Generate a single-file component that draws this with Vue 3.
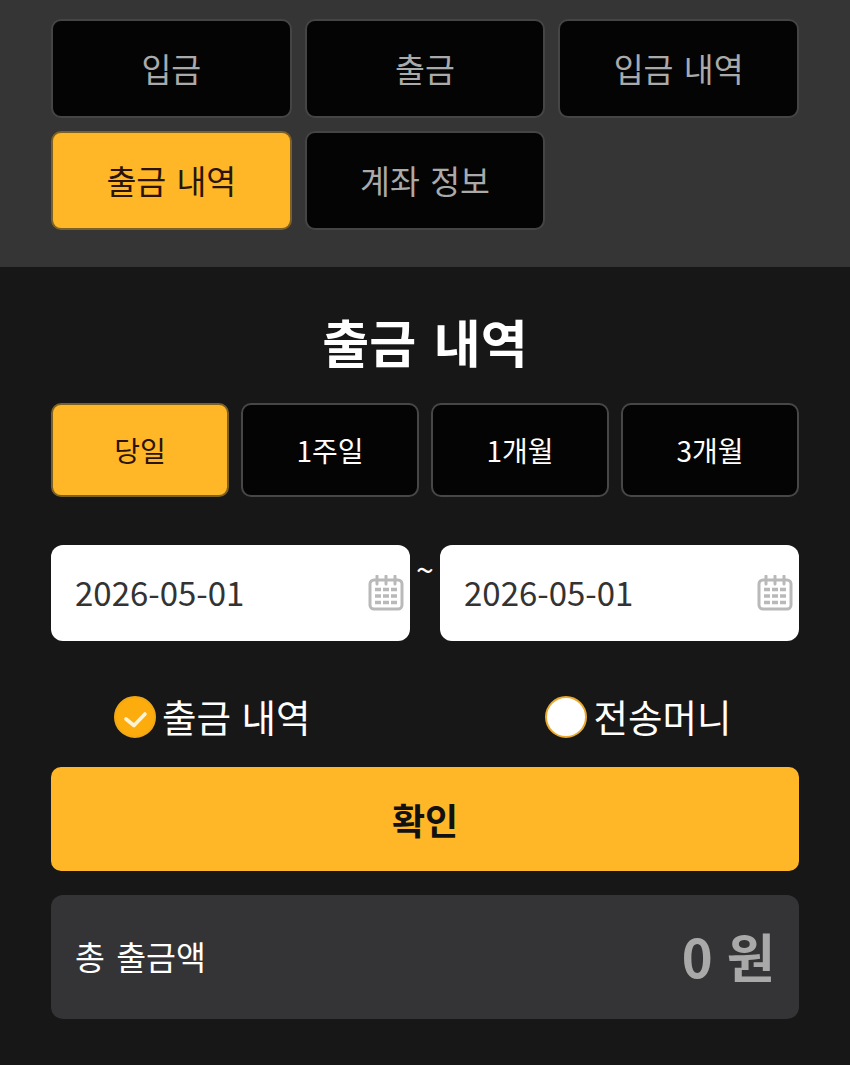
<script setup>
import { ref } from 'vue'

const tabs = ['입금', '출금', '입금 내역', '출금 내역', '계좌 정보']
const activeTab = ref('출금 내역')

const periods = ['당일', '1주일', '1개월', '3개월']
const activePeriod = ref('당일')

const dateFrom = ref('2026-05-01')
const dateTo = ref('2026-05-01')

const kind = ref('withdraw')
const kinds = [
  { value: 'withdraw', label: '출금 내역' },
  { value: 'money', label: '전송머니' },
]
</script>

<template>
  <div class="page">
    <section class="tabs">
      <button
        v-for="tab in tabs"
        :key="tab"
        type="button"
        class="tab"
        :class="{ on: tab === activeTab }"
        @click="activeTab = tab"
      >
        {{ tab }}
      </button>
    </section>

    <section class="panel">
      <h1 class="title">출금 내역</h1>

      <div class="periods">
        <button
          v-for="p in periods"
          :key="p"
          type="button"
          class="period"
          :class="{ on: p === activePeriod }"
          @click="activePeriod = p"
        >
          {{ p }}
        </button>
      </div>

      <div class="dates">
        <div class="date-box">
          <span class="date-text">{{ dateFrom }}</span>
          <svg class="cal" viewBox="0 0 36 36" fill="none" stroke="#b9b9b9" stroke-width="3">
            <rect x="2" y="5" width="32" height="29" rx="4" />
            <path d="M9 1v8M18 1v8M27 1v8" stroke-linecap="round" />
            <path d="M7 14.500h6M15 14.500h6M23 14.500h6M7 21h6M15 21h6M23 21h6M7 27.500h6M15 27.500h6M23 27.500h6" stroke-width="3.400" />
          </svg>
        </div>
        <span class="tilde">~</span>
        <div class="date-box">
          <span class="date-text">{{ dateTo }}</span>
          <svg class="cal" viewBox="0 0 36 36" fill="none" stroke="#b9b9b9" stroke-width="3">
            <rect x="2" y="5" width="32" height="29" rx="4" />
            <path d="M9 1v8M18 1v8M27 1v8" stroke-linecap="round" />
            <path d="M7 14.500h6M15 14.500h6M23 14.500h6M7 21h6M15 21h6M23 21h6M7 27.500h6M15 27.500h6M23 27.500h6" stroke-width="3.400" />
          </svg>
        </div>
      </div>

      <div class="kinds">
        <label v-for="k in kinds" :key="k.value" class="kind" @click="kind = k.value">
          <span class="radio" :class="{ on: kind === k.value }">
            <svg v-if="kind === k.value" viewBox="0 0 42 42" width="42" height="42" fill="none">
              <path d="M12 23l8 6.500L31 18" stroke="#fff3d0" stroke-width="3.600" stroke-linecap="round" stroke-linejoin="round" />
            </svg>
          </span>
          <span class="kind-text">{{ k.label }}</span>
        </label>
      </div>

      <button type="button" class="confirm">확인</button>

      <div class="total">
        <span class="total-label">총 출금액</span>
        <span class="total-value">0 원</span>
      </div>
    </section>
  </div>
</template>

<style>
html,
body {
  margin: 0;
  background: #171717;
}
</style>

<style scoped>
.page {
  width: 850px;
  height: 1065px;
  overflow: hidden;
  font-family: "Noto Sans CJK KR", "Noto Sans", sans-serif;
}
button {
  font-family: inherit;
  cursor: pointer;
  padding: 0;
}

.tabs {
  box-sizing: border-box;
  height: 267px;
  padding: 19px 51px 0;
  background: #353535;
  display: grid;
  grid-template-columns: repeat(3, 1fr);
  grid-auto-rows: 99px;
  gap: 13px;
  align-content: start;
}
.tab {
  background: #040404;
  border: 2px solid #454545;
  border-radius: 10px;
  color: #aaaaaa;
  font-size: 32.500px;
  word-spacing: 3px;
  padding-bottom: 3px;
}
.tab.on {
  background: #ffb627;
  border-color: #7d6026;
  color: #2a1408;
}

.panel {
  box-sizing: border-box;
  height: 798px;
  padding: 0 51px;
  background: #171717;
}
.title {
  margin: 0;
  padding-top: 38px;
  height: 136px;
  box-sizing: border-box;
  text-align: center;
  color: #fff;
  font-size: 51px;
  font-weight: 700;
  word-spacing: 6px;
  line-height: 72px;
}

.periods {
  display: grid;
  grid-template-columns: repeat(4, 1fr);
  gap: 12px;
}
.period {
  height: 94px;
  background: #040404;
  border: 2px solid #474747;
  border-radius: 10px;
  color: #fff;
  font-size: 28px;
}
.period.on {
  background: #ffb627;
  border-color: #7d6026;
  color: #2a1408;
}

.dates {
  margin-top: 48px;
  display: flex;
  align-items: flex-start;
}
.date-box {
  flex: 1;
  height: 96px;
  box-sizing: border-box;
  padding: 0 6px 0 24px;
  background: #fff;
  border-radius: 12px;
  display: flex;
  align-items: center;
  justify-content: space-between;
}
.date-text {
  color: #333;
  font-size: 33px;
  padding-bottom: 2px;
}
.cal {
  width: 36px;
  height: 36px;
}
.tilde {
  width: 30px;
  text-align: center;
  color: #fff;
  font-size: 32px;
  line-height: 46px;
}

.kinds {
  margin-top: 46px;
  height: 60px;
  display: flex;
  padding-left: 63px;
}
.kind {
  display: flex;
  align-items: center;
  gap: 6px;
  color: #fff;
  font-size: 37.500px;
  word-spacing: 2px;
  height: 60px;
  line-height: 60px;
}
.kind-text {
  margin-top: -2px;
}
.kind + .kind {
  margin-left: 235px;
}
.radio {
  width: 42px;
  height: 42px;
  flex: none;
  box-sizing: border-box;
  border-radius: 50%;
  background: #fff;
  border: 2px solid #e9a92e;
  display: flex;
  align-items: center;
  justify-content: center;
}
.radio svg {
  margin: -2px;
}
.radio.on {
  background: #fcac0c;
  border-color: #f0a814;
}

.confirm {
  display: block;
  width: 100%;
  height: 104px;
  margin-top: 20px;
  background: #ffb627;
  border: none;
  border-radius: 10px;
  color: #111;
  font-size: 36px;
  font-weight: 700;
}

.total {
  margin-top: 24px;
  height: 124px;
  box-sizing: border-box;
  padding: 0 24px 4px;
  background: #343436;
  border-radius: 12px;
  display: flex;
  align-items: center;
  justify-content: space-between;
}
.total-label {
  color: #fff;
  font-size: 32.500px;
  word-spacing: 4px;
}
.total-value {
  color: #a9a9a9;
  font-size: 52.500px;
  font-weight: 700;
  word-spacing: 2px;
}
</style>
